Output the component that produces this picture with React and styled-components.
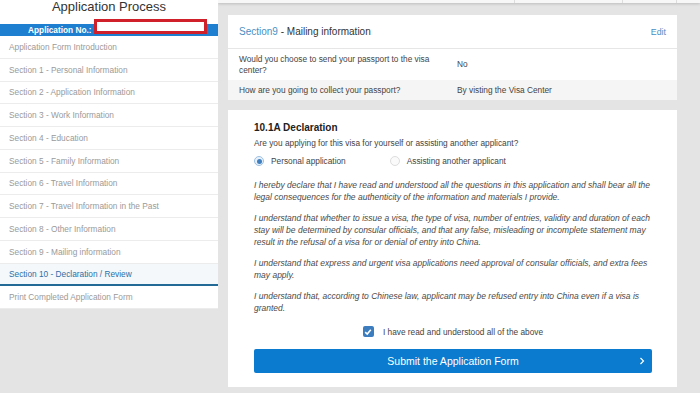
import React from 'react'
import styled, { createGlobalStyle } from 'styled-components'

const GlobalStyle = createGlobalStyle`
  html, body {
    margin: 0;
    padding: 0;
    background: #e4e4e4;
  }
  body {
    font-family: "Liberation Sans", Arial, sans-serif;
    overflow: hidden;
  }
  * { box-sizing: border-box; }
`

const Page = styled.div`
  display: flex;
  width: 700px;
  height: 393px;
  background: #e4e4e4;
  overflow: hidden;
`

const Sidebar = styled.nav`
  width: 218px;
  flex-shrink: 0;
  align-self: flex-start;
  background: #fff;
  position: relative;
`

const Title = styled.div`
  height: 24px;
  text-align: center;
  font-size: 13px;
  line-height: 13px;
  color: #333;
`

const AppNoBar = styled.div`
  height: 12px;
  display: flex;
  align-items: center;
  padding-left: 28px;
  background: #1e7fd0;
  color: #fff;
  font-weight: bold;
  font-size: 8.3px;
`

const RedactBox = styled.div`
  position: absolute;
  left: 94px;
  top: 19px;
  width: 113px;
  height: 15px;
  background: #fff;
  border: 3px solid #d0202a;
`

const NavItem = styled.div`
  height: 22.75px;
  display: flex;
  align-items: center;
  padding-left: 9px;
  font-size: 8.3px;
  color: ${p => (p.$active ? '#2a6fa6' : '#9a9a9a')};
  background: ${p => (p.$active ? '#f4f8fb' : '#fff')};
  border-bottom: ${p => (p.$active ? '2px solid #236a96' : '1px solid #ececec')};
`

const Main = styled.main`
  flex: 1;
  display: flex;
  flex-direction: column;
`

const TopStrip = styled.div`
  height: 3px;
  display: flex;
  background: #f7f7f7;
  box-shadow: 0 1px 3px rgba(0, 0, 0, 0.18);
`

const StripCell = styled.div`
  width: ${p => p.$w}px;
  border-right: 1px solid #ddd;
`

const Content = styled.div`
  display: flex;
  flex-direction: column;
  gap: 10px;
  padding: 12px 23px 0 10px;
`

const Card = styled.section`
  background: #fff;
`

const CardHeader = styled.div`
  height: 34px;
  display: flex;
  align-items: center;
  justify-content: space-between;
  padding: 0 11px;
  font-size: 10px;
  color: #333;
  border-bottom: 1px solid #e6e6e6;
`

const Link = styled.span`
  color: #4a8fc4;
`

const EditLink = styled.span`
  color: #4a8fc4;
  font-size: 8.8px;
`

const InfoRow = styled.div`
  display: grid;
  grid-template-columns: 218px 1fr;
  align-items: center;
  min-height: ${p => p.$h}px;
  padding: 0 11px;
  font-size: 8.3px;
  line-height: 11px;
  color: #444;
  background: ${p => (p.$alt ? '#f5f5f5' : '#fff')};
`

const Question = styled.div`
  padding-right: 14px;
`

const DeclCard = styled(Card)`
  height: 277px;
  padding: 12px 25px 0 26px;
`

const Heading = styled.h3`
  margin: 0;
  font-size: 10px;
  font-weight: bold;
  color: #222;
  line-height: 12px;
`

const Prompt = styled.div`
  margin-top: 4px;
  font-size: 8.3px;
  color: #444;
  line-height: 11px;
`

const RadioGroup = styled.div`
  display: flex;
  align-items: center;
  gap: 44px;
  margin-top: 6px;
  height: 12px;
`

const RadioOption = styled.label`
  display: flex;
  align-items: center;
  gap: 7px;
  font-size: 8.3px;
  color: #444;
`

const RadioDot = styled.span`
  width: 10px;
  height: 10px;
  border-radius: 50%;
  border: 1px solid ${p => (p.$checked ? '#9cc0e2' : '#ddd')};
  background: ${p => (p.$checked ? '#e8f1fa' : '#fafafa')};
  display: flex;
  align-items: center;
  justify-content: center;
  &::after {
    content: '';
    width: 5px;
    height: 5px;
    border-radius: 50%;
    background: ${p => (p.$checked ? '#3f7fbf' : 'transparent')};
  }
`

const Statements = styled.div`
  margin-top: 12px;
  display: flex;
  flex-direction: column;
  gap: 9px;
`

const Statement = styled.p`
  margin: 0;
  font-size: 8.5px;
  font-style: italic;
  line-height: 12px;
  color: #4a4a4a;
`

const AgreeRow = styled.label`
  margin-top: 12px;
  display: flex;
  justify-content: center;
  align-items: center;
  gap: 9px;
  font-size: 8.3px;
  color: #444;
`

const CheckBox = styled.span`
  width: 11px;
  height: 11px;
  border-radius: 2px;
  background: #3b7dbf;
  display: flex;
  align-items: center;
  justify-content: center;
`

const SubmitButton = styled.button`
  margin-top: 12px;
  width: 100%;
  height: 24px;
  position: relative;
  border: none;
  border-radius: 2px;
  background: #0a7bcf;
  color: #fff;
  font-family: inherit;
  font-size: 10.5px;
  display: flex;
  align-items: center;
  justify-content: center;
`

const Chevron = styled.svg`
  position: absolute;
  right: 7px;
  top: 8px;
`

const sections = [
  'Application Form Introduction',
  'Section 1 - Personal Information',
  'Section 2 - Application Information',
  'Section 3 - Work Information',
  'Section 4 - Education',
  'Section 5 - Family Information',
  'Section 6 - Travel Information',
  'Section 7 - Travel Information in the Past',
  'Section 8 - Other Information',
  'Section 9 - Mailing information',
  'Section 10 - Declaration / Review',
  'Print Completed Application Form',
]

const statements = [
  'I hereby declare that I have read and understood all the questions in this application and shall bear all the legal consequences for the authenticity of the information and materials I provide.',
  'I understand that whether to issue a visa, the type of visa, number of entries, validity and duration of each stay will be determined by consular officials, and that any false, misleading or incomplete statement may result in the refusal of a visa for or denial of entry into China.',
  'I understand that express and urgent visa applications need approval of consular officials, and extra fees may apply.',
  'I understand that, according to Chinese law, applicant may be refused entry into China even if a visa is granted.',
]

export default function App() {
  return (
    <Page>
      <GlobalStyle />
      <Sidebar>
        <Title>Application Process</Title>
        <AppNoBar>Application No.:</AppNoBar>
        <RedactBox />
        {sections.map((s, i) => (
          <NavItem key={s} $active={i === 10}>{s}</NavItem>
        ))}
      </Sidebar>

      <Main>
        <TopStrip>
          <StripCell $w={297} />
          <StripCell $w={108} />
          <StripCell $w={54} />
        </TopStrip>
        <Content>
          <Card>
            <CardHeader>
              <span><Link>Section9</Link> - Mailing information</span>
              <EditLink>Edit</EditLink>
            </CardHeader>
            <InfoRow $h={31}>
              <Question>Would you choose to send your passport to the visa center?</Question>
              <div>No</div>
            </InfoRow>
            <InfoRow $h={20} $alt>
              <Question>How are you going to collect your passport?</Question>
              <div>By visting the Visa Center</div>
            </InfoRow>
          </Card>

          <DeclCard>
            <Heading>10.1A Declaration</Heading>
            <Prompt>Are you applying for this visa for yourself or assisting another applicant?</Prompt>
            <RadioGroup>
              <RadioOption><RadioDot $checked />Personal application</RadioOption>
              <RadioOption><RadioDot />Assisting another applicant</RadioOption>
            </RadioGroup>
            <Statements>
              {statements.map(t => (
                <Statement key={t}>{t}</Statement>
              ))}
            </Statements>
            <AgreeRow>
              <CheckBox>
                <svg width="8" height="8" viewBox="0 0 8 8">
                  <path d="M1.2 4.2 L3.2 6 L6.8 1.8" fill="none" stroke="#fff" strokeWidth="1.6" />
                </svg>
              </CheckBox>
              I have read and understood all of the above
            </AgreeRow>
            <SubmitButton>
              Submit the Application Form
              <Chevron width="6" height="8" viewBox="0 0 6 8">
                <path d="M1.5 1 L4.5 4 L1.5 7" fill="none" stroke="#fff" strokeWidth="1.2" />
              </Chevron>
            </SubmitButton>
          </DeclCard>
        </Content>
      </Main>
    </Page>
  )
}
